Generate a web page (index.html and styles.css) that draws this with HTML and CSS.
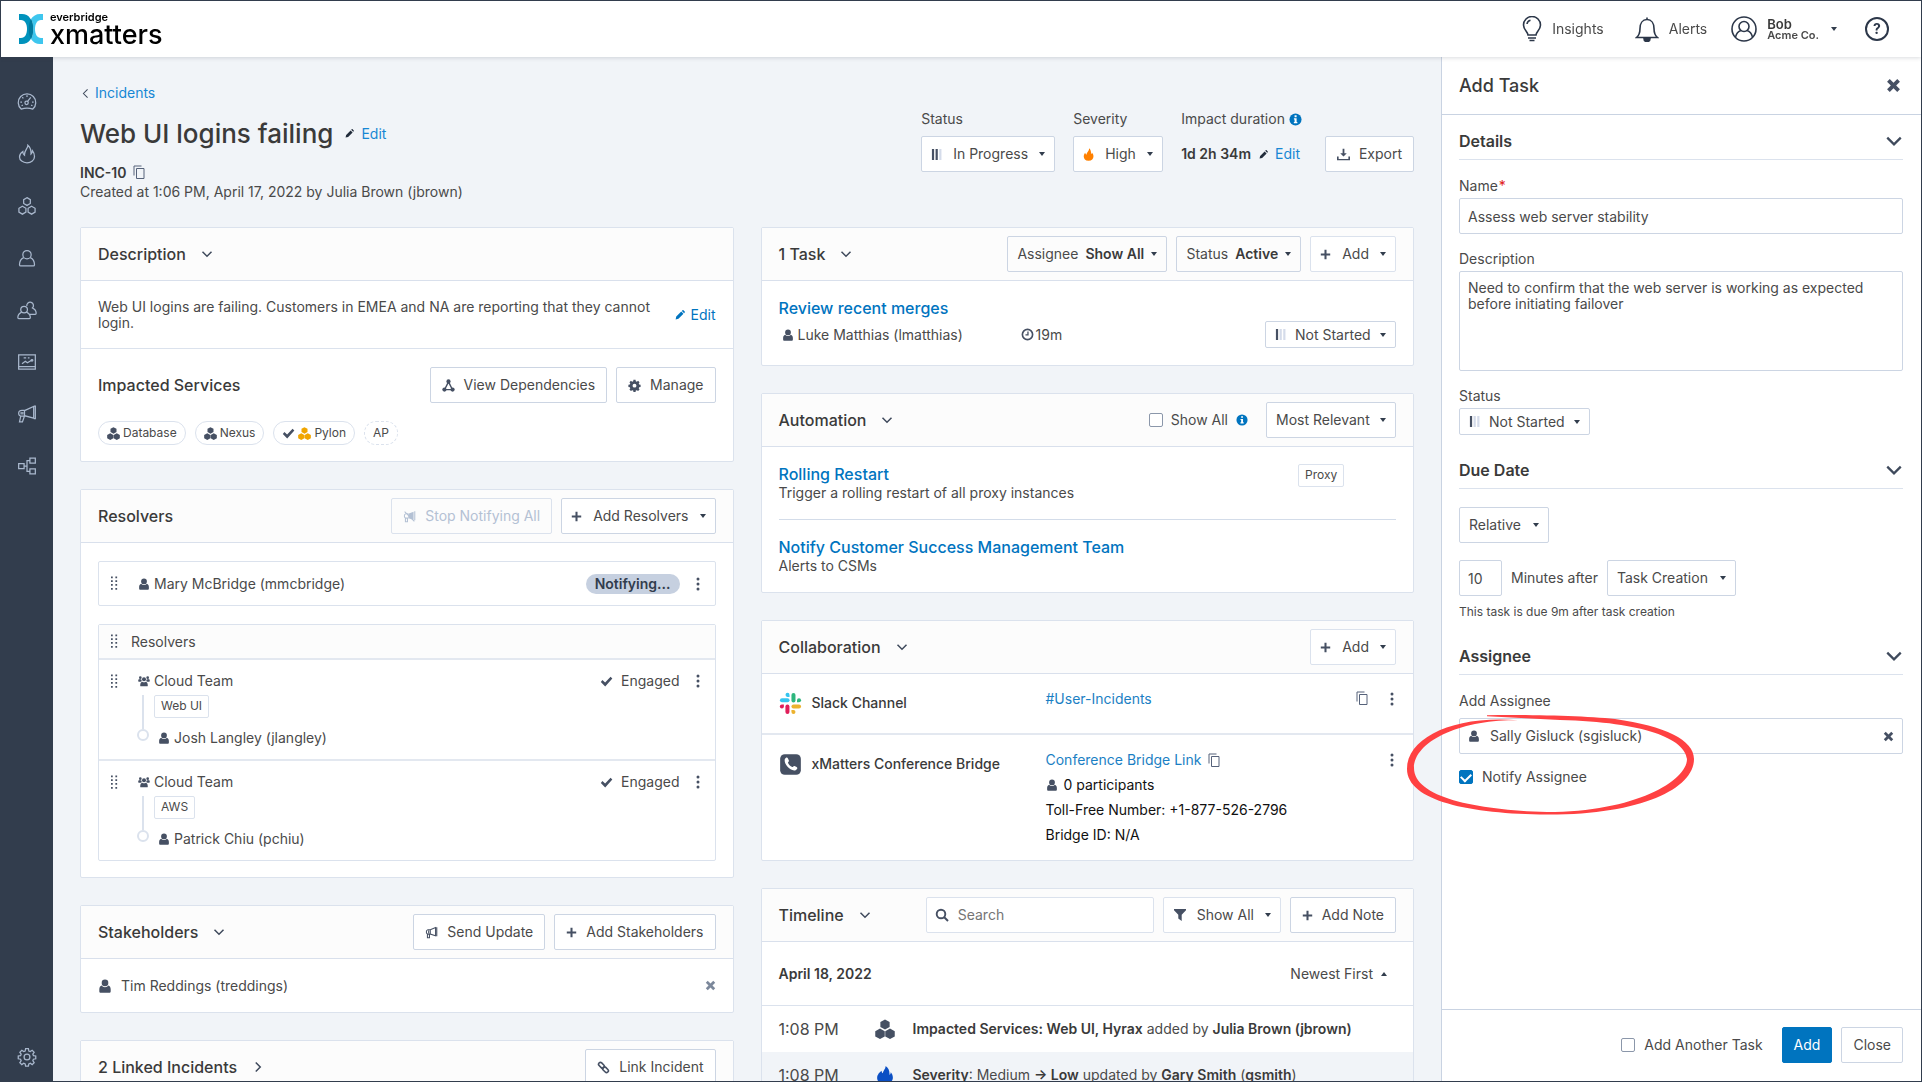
FILE: index.html
```html
<!DOCTYPE html>
<html lang="en">
<head>
  <meta charset="UTF-8">
  <meta name="viewport" content="width=device-width, initial-scale=1.0">
  <link rel="stylesheet" href="styles.css">
  <title>INC-10 Web UI logins failing</title>
</head>

<body>

<!-- Icon sprite -->
<svg class="sprite" aria-hidden="true">
  <symbol id="i-gauge" viewBox="0 0 24 24"><path d="M5 20.5a10.5 10.5 0 1 1 14 0c-4-1.4-10-1.4-14 0z"/><path d="M12 4v2M6.3 6.3l1.4 1.4M4 12h2M18 12h2M5.500 16.500l1.500-.8M17 15.700l1.500.8M12.500 11.500l4-5"/><circle cx="11.500" cy="13" r="2"/></symbol>
  <symbol id="i-flame-o" viewBox="0 0 24 24"><path d="M13 1.500c.3 4-4.500 6-4 12-1.500-1-2-2.500-2-4.500C4 11 3 13.500 3 15.500 3 19.500 7 22.500 12 22.500s9-3 9-7.500c0-2.500-1-5-2.500-7-.2 2-.6 3-1.700 4C17 8 16 4 13 1.500z"/></symbol>
  <symbol id="i-hex-o" viewBox="0 0 24 24"><path d="M12 2l4 2.300v4.700l-4 2.300-4-2.300V4.300zM6.500 12.300l4.200 2.400v4.700l-4.200 2.400-4.200-2.400v-4.700zM17.500 12.300l4.200 2.400v4.700l-4.200 2.400-4.200-2.400v-4.700z"/></symbol>
  <symbol id="i-user-o" viewBox="0 0 24 24"><circle cx="12" cy="8" r="5"/><path d="M8 11.500c-3 1.500-5 4.500-5 8.500 0 1 .5 1.500 1.500 1.500h15c1 0 1.500-.5 1.500-1.500 0-4-2-7-5-8.500"/></symbol>
  <symbol id="i-users-o" viewBox="0 0 24 24"><circle cx="8.500" cy="11.500" r="4"/><path d="M5.500 14.500C2.500 16 1 18 1 21c0 .8.5 1.200 1.200 1.200h12.600c.7 0 1.200-.4 1.200-1.200 0-3-1.500-5-4.500-6.500"/><path d="M11.800 7.200a4 4 0 1 1 6.700 2.300C21.500 11 23 13 23 16c0 .8-.5 1.200-1.200 1.200H15"/></symbol>
  <symbol id="i-report" viewBox="0 0 24 24"><path d="M2 3.500h20v17H2zM2 17.500h20M6 14l4-3 2.500 2 5-3M8 7h3M13 7h2"/><circle cx="18" cy="10" r="1"/></symbol>
  <symbol id="i-horn-o" viewBox="0 0 24 24"><path d="M9 8L20 3v14L9 14zM20 2.500h2v15h-2M9 7.500H6c-2.500 0-4 1.500-4 3.500s1.500 3.500 4 3.500h3zM4.500 14.500L3 21.500h3.500L9 14.500M5 9.500v3M7 9.500v3"/></symbol>
  <symbol id="i-flow" viewBox="0 0 24 24"><path d="M2 9h6.500v6H2zM15.500 2.500H22v6h-6.500zM15.500 15.500H22v6h-6.500zM8.500 12H12M15.500 5.500H12v13h3.500"/></symbol>
  <symbol id="i-gear-o" viewBox="0 0 24 24"><circle cx="12" cy="12" r="3.500"/><path d="M10.300 2h3.400l.5 2.800 1.700.7 2.300-1.600 2.400 2.400L19 8.600l.7 1.700 2.800.5v3.400l-2.800.5-.7 1.700 1.600 2.300-2.400 2.400-2.300-1.600-1.700.7-.5 2.800h-3.400l-.5-2.800-1.700-.7-2.300 1.600-2.400-2.400L5 16.400l-.7-1.700-2.800-.5v-3.400l2.800-.5L5 8.600 3.400 6.300l2.400-2.400 2.300 1.600 1.700-.7z"/></symbol>
  <symbol id="i-bulb" viewBox="0 0 20 26"><path d="M6 19c0-3-4.500-5-4.500-10a8.500 8.500 0 0 1 17 0c0 5-4.500 7-4.500 10z"/><path d="M6 22h8M7.500 24.500h5M5 8c.3-2 1.500-3.300 3.500-3.700"/></symbol>
  <symbol id="i-bell" viewBox="0 0 24 26"><path d="M1.500 21.500c2.500-2 3.500-4.500 3.500-9 0-5 2.500-9 7-9s7 4 7 9c0 4.500 1 7 3.500 9zM12 3.500V1.500"/><path d="M9 22.500h6a3 3 0 0 1-6 0z" fill="currentColor"/></symbol>
  <symbol id="i-avatar" viewBox="0 0 26 26"><circle cx="13" cy="13" r="12"/><circle cx="13" cy="10.500" r="5"/><path d="M4.500 21c1-4 2.500-5.500 5.500-6.500M21.500 21c-1-4-2.500-5.500-5.500-6.500"/></symbol>
  <symbol id="i-chev-down" viewBox="0 0 16 16"><path d="M2 5l6 6 6-6"/></symbol>
  <symbol id="i-chev-right" viewBox="0 0 16 16"><path d="M5 2l6 6-6 6"/></symbol>
  <symbol id="i-chev-left" viewBox="0 0 16 16"><path d="M11 2L5 8l6 6"/></symbol>
  <symbol id="i-copy" viewBox="0 0 14 14"><path d="M2 10.500V1h7.500M4.500 3.500H12v10H4.500z"/></symbol>
  <symbol id="i-pencil" viewBox="0 0 16 16"><path d="M1 15l1-4.500L10 2.500 13.500 6l-8 8zM11 1.500l1-1c.5-.5 1-.5 1.500 0l2 2c.5.5.5 1 0 1.500l-1 1z"/></symbol>
  <symbol id="i-user" viewBox="0 0 16 16"><circle cx="8" cy="4.500" r="3.800"/><path d="M4.300 7.500C5 8.700 6.400 9.400 8 9.400s3-.7 3.700-1.900c1.800.5 2.800 2 2.800 4.500v2c0 1.200-.6 1.700-1.700 1.700H3.200c-1.100 0-1.700-.5-1.700-1.700v-2c0-2.500 1-4 2.800-4.500z"/></symbol>
  <symbol id="i-group" viewBox="0 0 18 16"><circle cx="9" cy="5.500" r="3"/><circle cx="3.500" cy="3" r="2"/><circle cx="14.500" cy="3" r="2"/><path d="M4.500 16c-.8 0-1.200-.5-1.200-1.300 0-3 .8-5 3-5.700 1.700 1 3.700 1 5.400 0 2.200.7 3 2.700 3 5.700 0 .8-.4 1.300-1.200 1.300zM1 9C0 9 0 6 1.500 5c1.200.6 2.500.6 3.500.2 0 1.500.3 2 1 2.800L4 9zM17 9c1 0 1-3-.5-4-1.200.6-2.500.6-3.500.2 0 1.500-.3 2-1 2.800l2 1z"/></symbol>
  <symbol id="i-hex" viewBox="0 0 16 16"><path d="M8 .3l3.700 2v4L8 8.400l-3.700-2.100v-4zM4 7.600l3.800 2.100v4.200L4 16 .2 13.900V9.700zM12 7.600l3.800 2.100v4.200L12 16l-3.800-2.100V9.700z"/></symbol>
  <symbol id="i-check" viewBox="0 0 16 14"><path d="M1 7.500L3 5.300l3.300 3L13 1l2.200 2.200L6.400 13z"/></symbol>
  <symbol id="i-deps" viewBox="0 0 16 16"><circle cx="8" cy="3" r="2.600"/><circle cx="3" cy="13" r="2.600"/><circle cx="13" cy="13" r="2.600"/><path d="M7 3.500h2l4.500 9h-1.800L8 5.500 4.300 12.500H2.500zM3 12.200h10v1.600H3z"/></symbol>
  <symbol id="i-gear" viewBox="0 0 16 16"><path fill-rule="evenodd" d="M6.700 1h2.600l.3 1.800 1.300.5 1.500-1 1.800 1.800-1 1.500.5 1.300 1.800.3v2.600l-1.800.3-.5 1.300 1 1.500-1.800 1.800-1.500-1-1.300.5-.3 1.800H6.700l-.3-1.800-1.300-.5-1.500 1-1.800-1.800 1-1.500-.5-1.300L.5 9.800V7.200l1.800-.3.5-1.300-1-1.500 1.800-1.800 1.500 1 1.300-.5zM8 5.800a2.400 2.400 0 1 0 0 4.800 2.400 2.400 0 0 0 0-4.800z"/></symbol>
  <symbol id="i-horn" viewBox="0 0 16 16"><path fill="none" stroke="currentColor" stroke-width="1.300" d="M6.500 4.500L13 2v10l-6.500-2zM6.500 4.500H3.500C1 5 1 9.500 3.500 10h3M3 10v4.500h2.500V10M14.500 1.500v11M4.500 5.500v3.500"/></symbol>
  <symbol id="i-mute" viewBox="0 0 16 16"><path d="M6.500 4.500L13 2v10l-6.500-2z"/><path fill="none" stroke="currentColor" stroke-width="1.300" d="M6.500 4.500H3.500C1 5 1 9.500 3.500 10h3M3 10v4.500h2.500V10M14.500 1.500v11M2 2l12 12"/></symbol>
  <symbol id="i-plus" viewBox="0 0 14 14"><path d="M5.700 1h2.600v4.700H13v2.600H8.300V13H5.700V8.300H1V5.700h4.700z"/></symbol>
  <symbol id="i-times" viewBox="0 0 14 14"><path d="M3.500 1L7 4.500 10.500 1 13 3.500 9.500 7l3.500 3.500-2.500 2.500L7 9.500 3.500 13 1 10.500 4.500 7 1 3.500z"/></symbol>
  <symbol id="i-link" viewBox="0 0 16 16"><g fill="none" stroke="currentColor" stroke-width="2"><rect x="1.500" y="3" width="8" height="4.500" rx="2.200" transform="rotate(45 5.500 5.200)"/><rect x="6.500" y="8.500" width="8" height="4.500" rx="2.200" transform="rotate(45 10.500 10.700)"/></g></symbol>
  <symbol id="i-grip" viewBox="0 0 8 16"><path d="M0 0h2v2H0zM5 0h2v2H5zM0 4.300h2v2H0zM5 4.300h2v2H5zM0 8.600h2v2H0zM5 8.600h2v2H5zM0 13h2v2H0zM5 13h2v2H5z"/></symbol>
  <symbol id="i-dots" viewBox="0 0 4 14"><circle cx="2" cy="2" r="1.500"/><circle cx="2" cy="7" r="1.500"/><circle cx="2" cy="12" r="1.500"/></symbol>
  <symbol id="i-info" viewBox="0 0 14 14"><circle cx="7" cy="7" r="6.500"/><path fill="#fff" d="M6 2.500h2.200v2H6zM5.300 5.700h2.900v4h.8v1.300H5.200V9.700H6V7h-.7z"/></symbol>
  <symbol id="i-bars-2" viewBox="0 0 12 12"><path d="M1 0h2.400v12H1zM5 0h2.400v12H5z"/><path fill="#d5dcea" d="M9 0h2.400v12H9z"/></symbol>
  <symbol id="i-bars-1" viewBox="0 0 12 12"><path d="M1 0h2.400v12H1z"/><path fill="#d5dcea" d="M5 0h2.400v12H5zM9 0h2.400v12H9z"/></symbol>
  <symbol id="i-fire" viewBox="0 0 14 16"><path d="M7.800 0c.5 3.500-3.500 4.800-3.300 8.200-1-.4-1.500-1.300-1.600-2.400C-.5 9 .3 16 7 16s8-6.800 4.300-10.700c-.2 1.200-.5 1.700-1.200 2.100C10.500 4.500 9.800 1.500 7.800 0z"/></symbol>
  <symbol id="i-flame" viewBox="0 0 14 16"><path d="M7.500 0c.3 2.500-2.200 3.800-2.500 6.500C4.300 6 4 5.300 4 4.300 1.500 6 0 8.200 0 10.600 0 13.800 3 16 7 16s7-2.200 7-5.500c0-1.900-.7-3.600-1.900-5-.1 1.200-.4 1.900-1.100 2.500C11.200 4.600 10.200 1.500 7.500 0z"/></symbol>
  <symbol id="i-export" viewBox="0 0 16 16"><path d="M6.900 1h2.200v5.500H12L8 10.500l-4-4h2.900z"/><path d="M0 10.500h2v3h12v-3h2V15H0z"/></symbol>
  <symbol id="i-clock" viewBox="0 0 14 14"><g fill="none" stroke="currentColor" stroke-width="1.800"><circle cx="7" cy="7" r="5.500"/><path d="M7.500 3.800V7.500H4.800" stroke-width="1.400"/></g></symbol>
  <symbol id="i-filter" viewBox="0 0 14 14"><path d="M1 1h12v1.200L8.700 6.800V13L5.300 10.500V6.800L1 2.200z"/></symbol>
  <symbol id="i-search" viewBox="0 0 14 14"><g fill="none" stroke="currentColor" stroke-width="1.900"><circle cx="6" cy="6" r="4.300"/><path d="M9 9l4 4"/></g></symbol>
  <symbol id="i-phone" viewBox="0 0 20 20"><rect x="1" y="1" width="18" height="18" rx="4"/><path fill="#fff" d="M5 5.500c1-1.800 2.200-2 2.800-.7l.8 1.800c.3.8-.8 1.300-.8 1.900.5 1.600 2 3 3.700 3.700.7.100 1.200-1.200 2-.9l1.800.9c1.200.6.8 1.900-.8 2.700C10.500 16.500 4 10 5 5.500z"/></symbol>
  <symbol id="i-slack" viewBox="0 0 24 24"><g fill="#36c5f0"><rect x="1" y="6.500" width="10" height="4.200" rx="2.100"/><path d="M11 5.100H8.800A2.100 2.100 0 1 1 11 3z"/></g><g fill="#2eb67d"><rect x="13" y="1" width="4.200" height="10" rx="2.100"/><path d="M18.800 10.700V8.600a2.100 2.100 0 1 1 2.100 2.100z"/></g><g fill="#ecb22e"><rect x="13" y="13" width="10" height="4.200" rx="2.100"/><path d="M13 18.800h2.100A2.100 2.100 0 1 1 13 20.900z"/></g><g fill="#e01e5a"><rect x="6.700" y="13" width="4.200" height="10" rx="2.100"/><path d="M5.100 13v2.100A2.100 2.100 0 1 1 3 13z"/></g></symbol>
</svg>

<div class="app">
  <header class="topbar">
    <a class="logo" href="#" aria-label="everbridge xmatters">
      <svg class="logo-mark" viewBox="0 0 24 30" aria-hidden="true">
        <path fill="#0092bc" d="M0 0h3c7 0 11 6 11 15S10 30 3 30H0v-6h2c4 0 6-4 6-9S6 6 2 6H0z"/>
        <path fill="#3ec6ee" d="M24 0h-3c-4 0-7 2-9 5 1.500 2.500 2.200 6 2.200 10S13.500 22.500 12 25c2 3 5 5 9 5h3v-6h-2c-4 0-6-4-6-9s2-9 6-9h2z"/>
        <path fill="#007a9f" d="M12 5c1.500 2.500 2.200 6 2.200 10S13.500 22.500 12 25c-1.600-2.500-2.200-6-2.200-10S10.400 7.500 12 5z"/>
      </svg>
      <span class="logo-text"><small>everbridge</small><b>xmatters</b></span>
    </a>
    <nav class="topnav">
      <a class="topnav-insights" href="#"><svg class="line-icon" width="20" height="26"><use href="#i-bulb"/></svg>Insights</a>
      <a class="topnav-alerts" href="#"><svg class="line-icon" width="24" height="26"><use href="#i-bell"/></svg>Alerts</a>
      <button class="profile caret" type="button">
        <svg class="line-icon" width="26" height="26"><use href="#i-avatar"/></svg>
        <span class="profile-name"><b>Bob</b><small>Acme Co.</small></span>
      </button>
      <a class="help" href="#" aria-label="Help">?</a>
    </nav>
  </header>

  <div class="workspace">
    <nav class="sidebar" aria-label="Main">
      <a href="#" aria-label="Dashboard"><svg><use href="#i-gauge"/></svg></a>
      <a href="#" aria-label="Incidents"><svg><use href="#i-flame-o"/></svg></a>
      <a href="#" aria-label="Services"><svg><use href="#i-hex-o"/></svg></a>
      <a href="#" aria-label="Users"><svg><use href="#i-user-o"/></svg></a>
      <a href="#" aria-label="Groups"><svg><use href="#i-users-o"/></svg></a>
      <a href="#" aria-label="Reports"><svg><use href="#i-report"/></svg></a>
      <a href="#" aria-label="Messaging"><svg><use href="#i-horn-o"/></svg></a>
      <a href="#" aria-label="Workflows"><svg><use href="#i-flow"/></svg></a>
      <a class="sidebar-settings" href="#" aria-label="Settings"><svg><use href="#i-gear-o"/></svg></a>
    </nav>

    <main class="incident">
      <div class="incident-header">
        <div class="incident-info">
          <a class="breadcrumb" href="#"><svg class="chevron small"><use href="#i-chev-left"/></svg>Incidents</a>
          <div class="title-row">
            <h1>Web UI logins failing</h1>
            <a class="edit" href="#"><svg class="icon tiny"><use href="#i-pencil"/></svg>Edit</a>
          </div>
          <p class="incident-id"><b>INC-10</b><svg class="copy"><use href="#i-copy"/></svg></p>
          <p>Created at 1:06 PM, April 17, 2022 by Julia Brown (jbrown)</p>
        </div>
        <div class="incident-status">
          <div class="stat">
            <label for="inc-status">Status</label>
            <div class="dropdown caret"><svg class="icon bars"><use href="#i-bars-2"/></svg><select id="inc-status"><option>In Progress</option></select></div>
          </div>
          <div class="stat">
            <label for="inc-severity">Severity</label>
            <div class="dropdown caret"><svg class="icon orange-fire"><use href="#i-fire"/></svg><select id="inc-severity"><option>High</option></select></div>
          </div>
          <div class="stat">
            <span class="stat-label">Impact duration<svg class="icon info"><use href="#i-info"/></svg></span>
            <div class="duration"><b>1d 2h 34m</b><a class="edit" href="#"><svg class="icon tiny"><use href="#i-pencil"/></svg>Edit</a></div>
          </div>
          <button class="btn" type="button"><svg class="icon"><use href="#i-export"/></svg>Export</button>
        </div>
      </div>

      <div class="columns">
        <div class="column">

          <section class="card">
            <header class="card-header"><h2>Description</h2><svg class="chevron"><use href="#i-chev-down"/></svg></header>
            <div class="description">
              <p>Web UI logins are failing. Customers in EMEA and NA are reporting that they cannot login.</p>
              <a href="#"><svg class="icon tiny"><use href="#i-pencil"/></svg>Edit</a>
            </div>
            <div class="services">
              <div class="services-header">
                <h2>Impacted Services</h2>
                <div class="actions">
                  <button class="btn" type="button"><svg class="icon"><use href="#i-deps"/></svg>View Dependencies</button>
                  <button class="btn" type="button"><svg class="icon"><use href="#i-gear"/></svg>Manage</button>
                </div>
              </div>
              <div class="pills">
                <span class="pill"><svg class="icon"><use href="#i-hex"/></svg>Database</span>
                <span class="pill"><svg class="icon"><use href="#i-hex"/></svg>Nexus</span>
                <span class="pill"><svg class="icon"><use href="#i-check"/></svg><svg class="icon amber"><use href="#i-hex"/></svg>Pylon</span>
                <span class="pill dashed">AP</span>
              </div>
            </div>
          </section>

          <section class="card">
            <header class="card-header">
              <h2>Resolvers</h2>
              <div class="actions">
                <button class="btn" type="button" disabled><svg class="icon"><use href="#i-mute"/></svg>Stop Notifying All</button>
                <button class="btn caret" type="button"><svg class="icon plus"><use href="#i-plus"/></svg>Add Resolvers</button>
              </div>
            </header>
            <div class="resolvers">
              <div class="resolver-box resolver-single">
                <svg class="icon grip"><use href="#i-grip"/></svg>
                <span class="who"><svg class="icon user"><use href="#i-user"/></svg>Mary McBridge (mmcbridge)</span>
                <span class="notifying">Notifying...</span>
                <button class="more" type="button" aria-label="More"><svg class="icon"><use href="#i-dots"/></svg></button>
              </div>
              <div class="resolver-box">
                <div class="resolver-group"><svg class="icon grip"><use href="#i-grip"/></svg>Resolvers</div>
                <div class="resolver-item">
                  <div class="resolver-row">
                    <svg class="icon grip"><use href="#i-grip"/></svg>
                    <span class="who"><svg class="icon user"><use href="#i-group"/></svg>Cloud Team</span>
                    <span class="engaged"><svg class="icon"><use href="#i-check"/></svg>Engaged</span>
                    <button class="more" type="button" aria-label="More"><svg class="icon"><use href="#i-dots"/></svg></button>
                  </div>
                  <div class="resolver-tree">
                    <span class="connector"></span>
                    <div>
                      <span class="tag">Web UI</span>
                      <p class="who"><svg class="icon user"><use href="#i-user"/></svg>Josh Langley (jlangley)</p>
                    </div>
                  </div>
                </div>
                <div class="resolver-item">
                  <div class="resolver-row">
                    <svg class="icon grip"><use href="#i-grip"/></svg>
                    <span class="who"><svg class="icon user"><use href="#i-group"/></svg>Cloud Team</span>
                    <span class="engaged"><svg class="icon"><use href="#i-check"/></svg>Engaged</span>
                    <button class="more" type="button" aria-label="More"><svg class="icon"><use href="#i-dots"/></svg></button>
                  </div>
                  <div class="resolver-tree">
                    <span class="connector"></span>
                    <div>
                      <span class="tag">AWS</span>
                      <p class="who"><svg class="icon user"><use href="#i-user"/></svg>Patrick Chiu (pchiu)</p>
                    </div>
                  </div>
                </div>
              </div>
            </div>
          </section>

          <section class="card">
            <header class="card-header">
              <h2>Stakeholders</h2><svg class="chevron"><use href="#i-chev-down"/></svg>
              <div class="actions">
                <button class="btn" type="button"><svg class="icon"><use href="#i-horn"/></svg>Send Update</button>
                <button class="btn" type="button"><svg class="icon plus"><use href="#i-plus"/></svg>Add Stakeholders</button>
              </div>
            </header>
            <div class="stakeholder">
              <svg class="icon"><use href="#i-user"/></svg>Tim Reddings (treddings)
              <button class="remove" type="button" aria-label="Remove"><svg class="icon"><use href="#i-times"/></svg></button>
            </div>
          </section>

          <section class="card">
            <header class="card-header">
              <h2>2 Linked Incidents</h2><svg class="chevron"><use href="#i-chev-right"/></svg>
              <div class="actions">
                <button class="btn" type="button"><svg class="icon"><use href="#i-link"/></svg>Link Incident</button>
              </div>
            </header>
          </section>
        </div>

        <div class="column">

          <section class="card">
            <header class="card-header">
              <h2>1 Task</h2><svg class="chevron"><use href="#i-chev-down"/></svg>
              <div class="actions">
                <label class="dropdown filter caret">Assignee <select><option>Show All</option></select></label>
                <label class="dropdown filter caret">Status <select><option>Active</option></select></label>
                <button class="btn light caret" type="button"><svg class="icon plus"><use href="#i-plus"/></svg>Add</button>
              </div>
            </header>
            <div class="task">
              <h3><a href="#">Review recent merges</a></h3>
              <div class="task-row">
                <span class="who"><svg class="icon user"><use href="#i-user"/></svg>Luke Matthias (lmatthias)</span>
                <span class="time-left"><svg class="icon clock"><use href="#i-clock"/></svg>19m</span>
                <div class="dropdown compact caret"><svg class="icon bars"><use href="#i-bars-1"/></svg><select aria-label="Task status"><option>Not Started</option></select></div>
              </div>
            </div>
          </section>

          <section class="card">
            <header class="card-header">
              <h2>Automation</h2><svg class="chevron"><use href="#i-chev-down"/></svg>
              <div class="actions">
                <label class="check"><input type="checkbox">Show All<svg class="icon info"><use href="#i-info"/></svg></label>
                <div class="dropdown caret"><select aria-label="Sort automation"><option>Most Relevant</option></select></div>
              </div>
            </header>
            <div class="automations">
              <div class="automation">
                <div><h3><a href="#">Rolling Restart</a></h3><p>Trigger a rolling restart of all proxy instances</p></div>
                <span class="tag">Proxy</span>
              </div>
              <div class="automation">
                <div><h3><a href="#">Notify Customer Success Management Team</a></h3><p>Alerts to CSMs</p></div>
              </div>
            </div>
          </section>

          <section class="card">
            <header class="card-header">
              <h2>Collaboration</h2><svg class="chevron"><use href="#i-chev-down"/></svg>
              <div class="actions">
                <button class="btn light caret" type="button"><svg class="icon plus"><use href="#i-plus"/></svg>Add</button>
              </div>
            </header>
            <div class="channel">
              <h4><svg class="icon"><use href="#i-slack"/></svg>Slack Channel</h4>
              <div class="channel-info"><p><a href="#">#User-Incidents</a></p></div>
              <svg class="copy"><use href="#i-copy"/></svg>
              <button class="more" type="button" aria-label="More"><svg class="icon"><use href="#i-dots"/></svg></button>
            </div>
            <div class="channel">
              <h4><svg class="icon"><use href="#i-phone"/></svg>xMatters Conference Bridge</h4>
              <div class="channel-info">
                <p><a href="#">Conference Bridge Link</a><svg class="copy"><use href="#i-copy"/></svg></p>
                <p><svg class="icon user"><use href="#i-user"/></svg>0 participants</p>
                <p>Toll-Free Number: +1-877-526-2796</p>
                <p>Bridge ID: N/A</p>
              </div>
              <button class="more" type="button" aria-label="More"><svg class="icon"><use href="#i-dots"/></svg></button>
            </div>
          </section>

          <section class="card">
            <header class="card-header">
              <h2>Timeline</h2><svg class="chevron"><use href="#i-chev-down"/></svg>
              <div class="actions">
                <label class="search"><svg class="icon"><use href="#i-search"/></svg><input type="text" placeholder="Search" aria-label="Search timeline"></label>
                <div class="dropdown light caret"><svg class="icon"><use href="#i-filter"/></svg><select aria-label="Filter timeline"><option>Show All</option></select></div>
                <button class="btn" type="button"><svg class="icon plus"><use href="#i-plus"/></svg>Add Note</button>
              </div>
            </header>
            <div class="timeline-date">
              <b>April 18, 2022</b>
              <button class="sort caret up" type="button">Newest First</button>
            </div>
            <div class="entry">
              <time>1:08 PM</time><svg class="icon"><use href="#i-hex"/></svg>
              <p><b>Impacted Services: Web UI, Hyrax</b> added by <b>Julia Brown (jbrown)</b></p>
            </div>
            <div class="entry shaded">
              <time>1:08 PM</time><svg class="icon blue-fire"><use href="#i-flame"/></svg>
              <p><b>Severity</b>: Medium <b>→ Low</b> updated by <b>Gary Smith</b> (<b>gsmith</b>)</p>
            </div>
          </section>
        </div>
      </div>
    </main>

    <!-- Add Task side panel -->
    <aside class="panel">
      <header class="panel-header">
        <h2>Add Task</h2>
        <button class="remove" type="button" aria-label="Close panel"><svg class="icon"><use href="#i-times"/></svg></button>
      </header>
      <form class="panel-body" id="add-task">
        <div class="panel-section"><h3>Details</h3><svg class="chevron"><use href="#i-chev-down"/></svg></div>
        <div class="field">
          <label for="task-name">Name<span class="required">*</span></label>
          <input class="text" type="text" id="task-name" value="Assess web server stability">
        </div>
        <div class="field">
          <label for="task-desc">Description</label>
          <textarea class="text" id="task-desc">Need to confirm that the web server is working as expected before initiating failover</textarea>
        </div>
        <div class="field">
          <label for="task-status">Status</label>
          <div class="dropdown compact caret"><svg class="icon bars"><use href="#i-bars-1"/></svg><select id="task-status"><option>Not Started</option></select></div>
        </div>

        <div class="panel-section"><h3>Due Date</h3><svg class="chevron"><use href="#i-chev-down"/></svg></div>
        <div class="field due-type">
          <div class="dropdown caret"><select aria-label="Due date type"><option>Relative</option></select></div>
        </div>
        <div class="field due-row">
          <input class="text minutes" type="text" id="minutes" value="10">
          <label for="minutes">Minutes after</label>
          <div class="dropdown caret"><select aria-label="Relative to"><option>Task Creation</option></select></div>
        </div>
        <p class="note">This task is due 9m after task creation</p>

        <div class="panel-section"><h3>Assignee</h3><svg class="chevron"><use href="#i-chev-down"/></svg></div>
        <div class="field assignee">
          <label for="assignee">Add Assignee</label>
          <div class="text assignee-input">
            <svg class="icon user"><use href="#i-user"/></svg>
            <input type="text" id="assignee" value="Sally Gisluck (sgisluck)">
            <button class="remove" type="button" aria-label="Clear"><svg class="icon"><use href="#i-times"/></svg></button>
          </div>
          <label class="check"><input type="checkbox" checked>Notify Assignee</label>
          <svg class="highlight" viewBox="1400 710 300 110" aria-hidden="true">
            <path d="M1487 716.300C1530 715.500 1585 717 1615 720C1665 727 1694 741 1694 760C1694 790 1640 816 1547 815.600C1470 815 1407 802 1407 770C1407 738 1455 716 1518 721.300C1462 720 1414 742 1414 769C1414 798 1475 811 1547 813C1635 813 1687 782 1687 760C1685 740 1645 723 1560 721L1487 717.300z"/>
          </svg>
        </div>
      </form>
      <footer class="panel-footer">
        <label class="check"><input type="checkbox">Add Another Task</label>
        <button class="btn primary" type="submit" form="add-task">Add</button>
        <button class="btn" type="button">Close</button>
      </footer>
    </aside>
  </div>
</div>

</body>
</html>
```

FILE: styles.css
```css
* {
  box-sizing: border-box;
}

body {
  margin: 0;
  font-family: Inter, "Open Sans", sans-serif;
  font-size: 14px;
  line-height: 18px;
  color: #4a4a4a;
}

h1, h2, h3, h4, p {
  margin: 0;
}

a {
  color: #0074bf;
  text-decoration: none;
}

b {
  font-weight: 600;
  color: #3a3a3a;
}

button, input, select, textarea {
  font: inherit;
  color: inherit;
}

button {
  cursor: pointer;
}

.sprite {
  display: none;
}

.icon {
  width: 14px;
  height: 14px;
  flex: none;
  fill: currentColor;
  color: #465063;
}

.icon.tiny {
  width: 10px;
  height: 10px;
}

.icon.user {
  width: 12px;
  height: 12px;
}

.icon.bars, .icon.plus {
  width: 11px;
  height: 11px;
}

.icon.info {
  color: #0074bf;
}

.icon.amber {
  color: #f0a500;
}

.icon.orange-fire {
  width: 11px;
  height: 13px;
  color: #ff8000;
}

.line-icon, .sidebar svg, .chevron, .copy {
  fill: none;
  stroke: currentColor;
  flex: none;
}

.chevron {
  width: 12px;
  height: 12px;
  stroke-width: 2;
  color: #3f4a5c;
}

.copy {
  width: 14px;
  height: 14px;
  color: #56627a;
}

/* top bar */
.app {
  display: flex;
  flex-direction: column;
  height: 100vh;
  border: 1px solid #323d4d;
  overflow: hidden;
}

.topbar {
  display: flex;
  align-items: center;
  justify-content: space-between;
  height: 56px;
  flex: none;
  padding: 0 32px 0 18px;
  background: #fff;
  box-shadow: 0 1px 4px rgba(50, 61, 77, 0.18);
  position: relative;
  z-index: 2;
}

.logo {
  display: flex;
  align-items: center;
  gap: 7px;
  color: #000;
}

.logo-mark {
  width: 24px;
  height: 30px;
}

.logo-text {
  display: flex;
  flex-direction: column;
}

.logo-text small {
  font-size: 11px;
  line-height: 10px;
  font-weight: 600;
}

.logo-text b {
  font-size: 27px;
  line-height: 25px;
  font-weight: 500;
  color: #000;
}

.topnav {
  display: flex;
  align-items: center;
}

.topnav a, .profile {
  display: flex;
  align-items: center;
  gap: 10px;
  color: #4a4a4a;
}

.topnav-alerts {
  margin: 0 24px 0 31px;
}

.line-icon {
  stroke-width: 1.600;
  color: #2c3749;
}

.profile {
  padding: 0;
  border: 0;
  background: none;
  text-align: left;
}

.profile-name {
  display: flex;
  flex-direction: column;
  margin-right: 2px;
}

.profile-name b {
  font-size: 13px;
  line-height: 12px;
}

.profile-name small {
  font-size: 11px;
  line-height: 11px;
  font-weight: 600;
}

.topnav .help {
  justify-content: center;
  width: 24px;
  height: 24px;
  margin-left: 28px;
  border: 2px solid #2c3749;
  border-radius: 50%;
  font-weight: 700;
  color: #2c3749;
}

/* small triangle at the end of menus */
.caret::after {
  content: "";
  flex: none;
  border: 3px solid transparent;
  border-top: 4px solid #323d4d;
  border-bottom: 0;
}

.caret.up::after {
  border-top: 0;
  border-bottom: 4px solid #323d4d;
}

.workspace {
  display: flex;
  flex: 1;
  min-height: 0;
}

.sidebar {
  display: flex;
  flex-direction: column;
  align-items: center;
  gap: 32px;
  width: 52px;
  flex: none;
  padding: 35px 0 14px;
  background: #323d4d;
}

.sidebar a {
  height: 20px;
  color: #a9b8cd;
}

.sidebar svg {
  display: block;
  width: 20px;
  height: 20px;
  stroke-width: 1.500;
}

.sidebar-settings {
  margin-top: auto;
}

/* incident page */
.incident {
  flex: 1;
  min-width: 0;
  padding: 27px;
  background: #f1f4f8;
  overflow-y: auto;
  scrollbar-width: none;
}

.incident-header {
  display: flex;
  justify-content: space-between;
  height: 143px;
}

.breadcrumb, .edit {
  display: inline-flex;
  align-items: center;
  color: #1787d4;
}

.breadcrumb {
  gap: 4px;
}

.chevron.small {
  width: 11px;
  height: 11px;
  stroke-width: 1.500;
}

.edit {
  gap: 7px;
}

.edit .icon {
  width: 9px;
  height: 9px;
  color: #222c3b;
}

.title-row {
  display: flex;
  align-items: center;
  gap: 12px;
  margin: 14px 0 12px;
}

h1 {
  font-size: 26px;
  line-height: 34px;
  font-weight: 500;
  color: #3a3a3a;
}

.incident-id {
  display: flex;
  align-items: center;
  gap: 5px;
}

.incident-info p {
  line-height: 19px;
}

.incident-status {
  display: flex;
  align-items: flex-start;
  gap: 18px;
  padding-top: 26px;
}

.stat label, .stat-label {
  display: flex;
  align-items: center;
  gap: 4px;
  margin-bottom: 8px;
}

.stat .info {
  width: 13px;
  height: 13px;
}

.stat .dropdown {
  gap: 9px;
}

.stat .dropdown select {
  padding: 0 2px;
}

.duration {
  display: flex;
  align-items: center;
  gap: 8px;
  height: 36px;
}

.incident-status > .btn {
  margin: 26px 0 0 5px;
}

.columns {
  display: grid;
  grid-template-columns: 1fr 1fr;
  align-items: start;
  gap: 27px;
}

.column {
  display: grid;
  gap: 27px;
}

.card {
  background: #fff;
  border: 1px solid #dbe2ed;
  border-radius: 2px;
}

.card-header {
  display: flex;
  align-items: center;
  gap: 15px;
  height: 53px;
  padding: 0 17px;
  background: #fcfcfc;
  border-bottom: 1px solid #d9e0ec;
}

h2, h3 {
  font-size: 16px;
  line-height: 20px;
  font-weight: 500;
  color: #3a3a3a;
}

.actions {
  display: flex;
  align-items: center;
  gap: 9px;
  margin-left: auto;
}

/* buttons and drop-downs */
.btn, .dropdown {
  display: flex;
  align-items: center;
  gap: 9px;
  height: 36px;
  padding: 0 11px;
  background: #fff;
  border: 1px solid #ccd5e3;
  border-radius: 2px;
  white-space: nowrap;
}

.btn.light, .dropdown.light {
  border-color: #dbe2ed;
}

.btn .icon {
  width: 13px;
  height: 13px;
}

.btn .icon.plus {
  width: 11px;
  height: 11px;
}

.btn.caret {
  gap: 11px;
  padding: 0 9px;
}

.btn:disabled {
  border-color: #dbe2ed;
  color: #b4c1d4;
  background: #fcfcfc;
}

.btn:disabled .icon {
  color: #b4c1d4;
}

.btn.primary {
  border-color: #0074bf;
  background: #0074bf;
  color: #fff;
}

.dropdown {
  gap: 10px;
  padding: 0 9px;
}

.dropdown select {
  flex: 1;
  padding: 0;
  border: 0;
  background: none;
  appearance: none;
  outline: 0;
}

.dropdown.compact {
  height: 27px;
  gap: 9px;
}

.dropdown.filter {
  gap: 7px;
  background: #fcfcfc;
}

.dropdown.filter select {
  font-weight: 600;
  color: #3a3a3a;
}

.check {
  display: flex;
  align-items: center;
  gap: 9px;
}

.check input {
  width: 14px;
  height: 14px;
  margin: 0;
  appearance: none;
  background: #fff;
  border: 1px solid #8b97aa;
  border-radius: 2px;
  display: grid;
  place-items: center;
}

.check input:checked {
  background: #0074bf;
  border-color: #0074bf;
}

.check input:checked::before {
  content: "";
  width: 8px;
  height: 5px;
  margin-bottom: 2px;
  border-left: 2px solid #fff;
  border-bottom: 2px solid #fff;
  transform: rotate(-45deg);
}

.check .info {
  width: 12px;
  height: 12px;
}

.card-header .check {
  gap: 8px;
  margin-right: 9px;
}

/* description */
.description {
  display: flex;
  align-items: center;
  gap: 10px;
  padding: 18px 17px 17px;
  line-height: 16px;
  border-bottom: 1px solid #dbe2ed;
}

.description p {
  flex: 1;
}

.description a {
  display: flex;
  align-items: center;
  gap: 6px;
}

.description .icon {
  color: #0074bf;
}

.services {
  padding: 18px 17px 16px;
}

.services-header {
  display: flex;
  align-items: center;
}

.pills {
  display: flex;
  gap: 9px;
  margin-top: 18px;
}

.pill {
  display: flex;
  align-items: center;
  gap: 3px;
  height: 24px;
  padding: 0 8px;
  border: 1px solid #dbe2ed;
  border-radius: 12px;
  font-size: 12px;
}

.pill .icon {
  width: 13px;
  height: 13px;
}

.pill.dashed {
  border-style: dashed;
}

/* resolvers */
.resolvers {
  display: grid;
  gap: 18px;
  padding: 18px 17px 16px;
}

.resolver-box {
  border: 1px solid #dbe2ed;
  border-radius: 2px;
}

.resolver-single, .resolver-row {
  display: flex;
  align-items: center;
}

.resolver-single {
  height: 45px;
  padding: 0 10px 0 12px;
}

.icon.grip {
  width: 7px;
  height: 15px;
  margin-right: 20px;
}

.who {
  display: flex;
  align-items: center;
  gap: 4px;
}

.notifying, .engaged {
  margin-left: auto;
}

.notifying {
  padding: 1px 9px;
  border-radius: 10px;
  background: #c6d0e0;
  font-weight: 600;
  color: #323d4d;
}

.engaged {
  display: flex;
  align-items: center;
  gap: 8px;
}

.engaged .icon {
  width: 13px;
  height: 13px;
}

.more {
  width: 14px;
  height: 16px;
  margin-left: 11px;
  padding: 0;
  border: 0;
  background: none;
}

.more .icon {
  display: block;
  width: 14px;
}

.resolver-group {
  display: flex;
  align-items: center;
  height: 33px;
  padding: 0 12px;
  background: #fcfcfc;
}

.resolver-group .grip {
  margin-right: 13px;
}

.resolver-item {
  padding: 12px 10px 12px 12px;
  border-top: 2px solid #e3e8f0;
}

.resolver-tree {
  display: flex;
  gap: 5px;
  padding: 5px 0 0 26px;
}

.resolver-tree .who {
  margin: 11px 0 0 4px;
}

.connector {
  display: flex;
  flex-direction: column;
  align-items: center;
  width: 12px;
}

.connector::before {
  content: "";
  width: 2px;
  height: 34px;
  background: #dbe2ed;
}

.connector::after {
  content: "";
  width: 8px;
  height: 8px;
  border: 2px solid #dbe2ed;
  border-radius: 50%;
}

.tag {
  display: inline-block;
  height: 23px;
  padding: 0 6px;
  border: 1px solid #dbe2ed;
  border-radius: 2px;
  font-size: 12px;
  line-height: 20px;
  vertical-align: top;
}

/* stakeholders */
.stakeholder {
  display: flex;
  align-items: center;
  gap: 9px;
  height: 53px;
  padding: 0 17px;
}

.remove {
  margin-left: auto;
  padding: 0;
  border: 0;
  background: none;
}

.remove .icon {
  display: block;
  width: 11px;
  height: 11px;
}

.stakeholder .remove .icon {
  color: #7c889b;
}

/* tasks and automation */
.task {
  padding: 17px;
}

h3 a {
  color: #0074bf;
}

.task-row {
  display: flex;
  align-items: center;
  margin-top: 3px;
}

.task-row .who {
  width: 242px;
  padding-left: 3px;
}

.time-left {
  display: flex;
  align-items: center;
  gap: 2px;
}

.icon.clock {
  width: 13px;
  height: 13px;
}

.task-row .dropdown {
  margin-left: auto;
}

.automations {
  padding: 0 17px;
}

.automation {
  display: grid;
  grid-template-columns: 1fr 98px;
  padding: 17px 0;
}

.automation + .automation {
  border-top: 1px solid #d3dce9;
}

.automation .tag {
  justify-self: start;
}

/* collaboration */
.channel {
  display: flex;
  align-items: flex-start;
  padding: 12px 14px 13px 17px;
}

.channel + .channel {
  border-top: 2px solid #e3e8f0;
}

.channel h4 {
  display: flex;
  align-items: center;
  gap: 10px;
  width: 267px;
  height: 34px;
  font-weight: 500;
  color: #3a3a3a;
}

.channel h4 .icon {
  width: 23px;
  height: 23px;
}

.channel-info {
  flex: 1;
  line-height: 25px;
  color: #111;
}

.channel-info p {
  display: flex;
  align-items: center;
  gap: 6px;
}

.channel-info a {
  color: #1b7fc4;
}

.channel > .copy, .channel .more {
  margin-top: 5px;
}

.channel .more {
  margin-left: 16px;
}

/* timeline */
.search {
  display: flex;
  align-items: center;
  gap: 9px;
  width: 228px;
  height: 36px;
  padding: 0 8px;
  background: #fff;
  border: 1px solid #dbe2ed;
  border-radius: 2px;
}

.search input {
  flex: 1;
  min-width: 0;
  padding: 0;
  border: 0;
  outline: 0;
}

.search input::placeholder {
  color: #757575;
}

.timeline-date {
  display: flex;
  align-items: center;
  justify-content: space-between;
  height: 64px;
  padding: 0 26px 0 17px;
  border-bottom: 1px solid #dbe2ed;
}

.sort {
  display: flex;
  align-items: center;
  gap: 8px;
  padding: 0;
  border: 0;
  background: none;
}

.entry {
  display: flex;
  align-items: center;
  height: 46px;
  padding: 0 17px;
}

.entry time {
  width: 96px;
  font-size: 16px;
}

.entry .icon {
  width: 20px;
  height: 20px;
  margin-right: 18px;
}

.entry .blue-fire {
  height: 18px;
  color: #0b4fc4;
}

.shaded {
  background: #f1f4f8;
}

/* add task panel */
.panel {
  display: flex;
  flex-direction: column;
  width: 480px;
  flex: none;
  background: #fff;
  border-left: 1px solid #c9d3e2;
}

.panel-header {
  display: flex;
  align-items: center;
  justify-content: space-between;
  height: 58px;
  padding: 0 20px 0 17px;
  border-bottom: 1px solid #c9d3e2;
}

.panel-header h2 {
  font-size: 18px;
}

.panel-header .icon {
  width: 15px;
  height: 15px;
}

.panel-body {
  flex: 1;
  padding: 16px 18px 0 17px;
}

.panel-section {
  display: flex;
  align-items: center;
  justify-content: space-between;
  margin-bottom: 18px;
  padding-bottom: 8px;
  border-bottom: 1px solid #dbe2ed;
}

.panel-section h3 {
  font-weight: 600;
}

.panel-section .chevron {
  width: 18px;
  height: 18px;
}

.field {
  margin-bottom: 17px;
}

.field + .panel-section {
  margin-top: 25px;
}

.note + .panel-section {
  margin-top: 26px;
}

.field > label {
  display: block;
  margin-bottom: 4px;
  line-height: 16px;
}

.required {
  margin-left: 1px;
  color: #e02020;
}

.text {
  display: block;
  width: 100%;
  height: 36px;
  padding: 0 8px;
  background: #fff;
  border: 1px solid #ccd5e3;
  border-radius: 2px;
  outline: 0;
}

textarea.text {
  height: 100px;
  padding: 8px;
  line-height: 16px;
  resize: none;
}

.field .dropdown {
  width: max-content;
}

.field .dropdown:not(.compact) select {
  padding-right: 2px;
}

.due-row {
  display: flex;
  align-items: center;
  gap: 9px;
  margin-bottom: 8px;
}

.due-row label {
  margin: 0;
}

.minutes {
  width: 43px;
}

.note {
  font-size: 12px;
  line-height: 16px;
}

.assignee {
  position: relative;
}

.assignee > label:first-child {
  margin-bottom: 9px;
}

.assignee-input {
  display: flex;
  align-items: center;
  gap: 10px;
}

.assignee-input input {
  flex: 1;
  padding: 0;
  border: 0;
  outline: 0;
}

.assignee .check {
  display: flex;
  margin-top: 15px;
}

/* hand-drawn ring laid over the assignee field */
.highlight {
  position: absolute;
  top: 16px;
  left: -59px;
  width: 300px;
  height: 110px;
  fill: #ff4142;
  pointer-events: none;
}

.panel-footer {
  display: flex;
  align-items: center;
  justify-content: flex-end;
  gap: 9px;
  height: 72px;
  padding: 0 18px 1px 17px;
  border-top: 1px solid #c9d3e2;
}

.panel-footer .check {
  margin-right: 10px;
}
```
